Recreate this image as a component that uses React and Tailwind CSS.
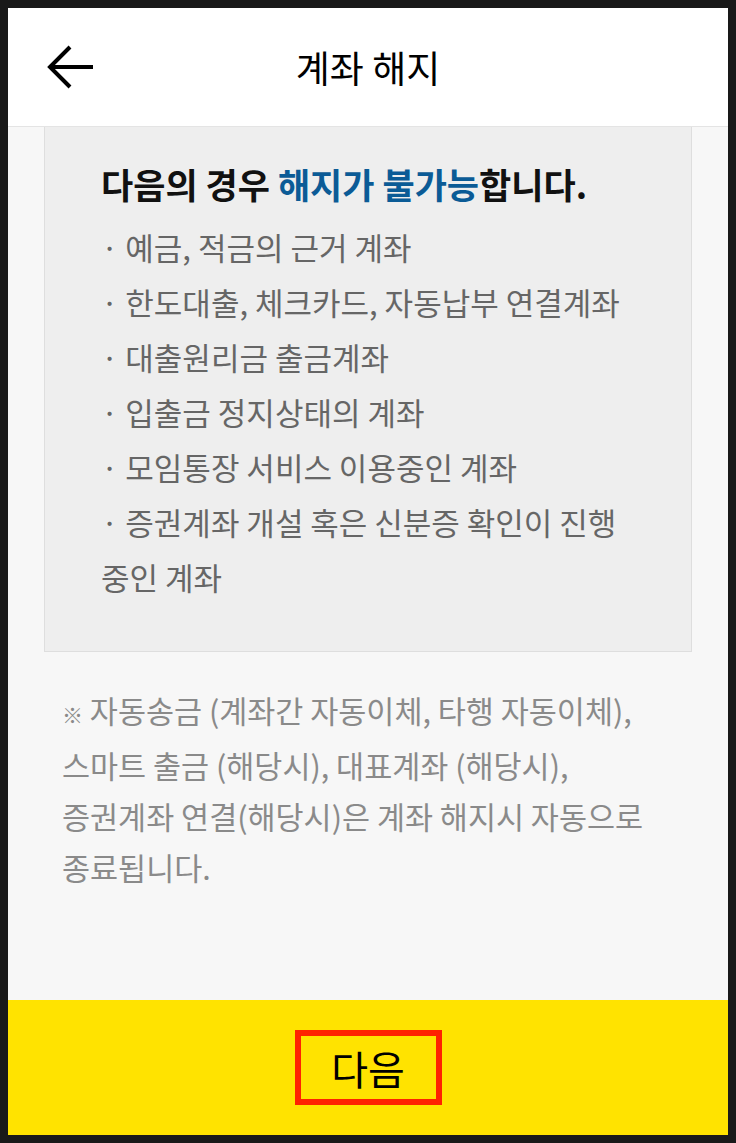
import React from 'react'

const font = { fontFamily: '"Noto Sans CJK KR", "Noto Sans", sans-serif' }

const items = [
  '· 예금, 적금의 근거 계좌',
  '· 한도대출, 체크카드, 자동납부 연결계좌',
  '· 대출원리금 출금계좌',
  '· 입출금 정지상태의 계좌',
  '· 모임통장 서비스 이용중인 계좌',
]

export default function App() {
  return (
    <div className="h-[1143px] w-[736px] bg-[#191919] p-2" style={font}>
      <div className="flex h-full flex-col">
        {/* header */}
        <header className="grid h-[119px] shrink-0 grid-cols-[1fr_auto_1fr] items-center border-b border-[#e4e4e4] bg-white">
          <div className="pl-[39px]">
            <svg width="48" height="44" viewBox="0 0 48 44" fill="none">
              <path d="M3 22H46" stroke="#000" strokeWidth="4" />
              <path d="M23 2L3 22L23 42" stroke="#000" strokeWidth="4" />
            </svg>
          </div>
          <h1 className="text-[37px] leading-none text-black">계좌 해지</h1>
          <div />
        </header>

        {/* content */}
        <main className="flex-1 bg-[#f7f7f7] px-9">
          <div className="border border-t-0 border-[#dedede] bg-[#eeeeee] pb-[47px] pl-[56px] pr-[30px] pt-[35px]">
            <h2 className="whitespace-nowrap text-[35px] font-bold leading-[44px] text-[#111]">
              다음의 경우 <span className="text-[#0b5b96]">해지가 불가능</span>합니다.
            </h2>
            <ul className="mt-[13px] whitespace-nowrap text-[31px] leading-[55px] text-[#666]">
              {items.map((t) => (
                <li key={t}>{t}</li>
              ))}
              <li>
                · 증권계좌 개설 혹은 신분증 확인이 진행
                <br />
                중인 계좌
              </li>
            </ul>
          </div>

          <p className="mt-[33px] whitespace-nowrap pl-[18px] text-[30.5px] leading-[51px] text-[#8a8a8a]">
            <span className="text-[21px]">※</span> 자동송금 (계좌간 자동이체, 타행 자동이체),
            <br />
            스마트 출금 (해당시), 대표계좌 (해당시),
            <br />
            증권계좌 연결(해당시)은 계좌 해지시 자동으로
            <br />
            종료됩니다.
          </p>
        </main>

        {/* footer */}
        <footer className="flex h-[135px] shrink-0 items-center justify-center bg-[#ffe300]">
          <button className="flex h-[75px] w-[147px] items-center justify-center border-[6px] border-[#ff2200] text-[40px] leading-none text-black">
            다음
          </button>
        </footer>
      </div>
    </div>
  )
}
